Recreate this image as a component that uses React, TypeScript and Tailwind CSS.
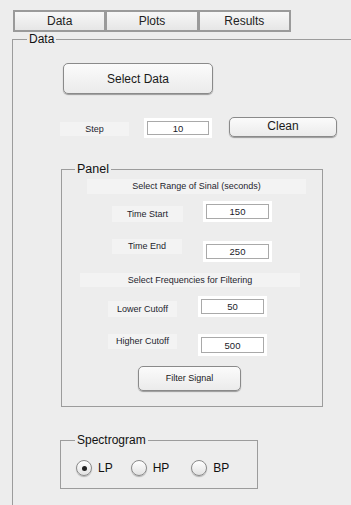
import React from "react";

const btn =
  "rounded-[5px] border border-[#8a8a8a] bg-gradient-to-b from-[#fbfbfb] to-[#ebebeb] shadow-[0_1px_1px_rgba(0,0,0,0.35)] flex items-center justify-center text-[#1a1a1a]";

function Field({ value, className }: { value: string; className: string }) {
  return (
    <div className={"bg-white p-[3px] " + className}>
      <div className="h-full w-full border border-[#a9a9a9] flex items-center justify-center text-[9.5px] leading-none text-[#1a1a2a] pt-[1px]">
        {value}
      </div>
    </div>
  );
}

function Label({ text, className }: { text: string; className: string }) {
  return (
    <div className={"bg-[#f3f3f3] flex items-center justify-center text-[9px] leading-none text-[#1e1e2e] " + className}>
      {text}
    </div>
  );
}

function Radio({ checked, label, className }: { checked?: boolean; label: string; className: string }) {
  return (
    <div className={"flex items-center " + className}>
      <div className="w-[16px] h-[16px] rounded-full border border-[#8a8a8a] bg-gradient-to-b from-[#ffffff] to-[#e2e2e2] shadow-[0_1px_1px_rgba(0,0,0,0.25)] flex items-center justify-center">
        {checked && <div className="w-[5px] h-[5px] rounded-full bg-[#222]" />}
      </div>
      <span className="ml-[6px] text-[12px] leading-none text-[#111]">{label}</span>
    </div>
  );
}

export default function App() {
  return (
    <div className="w-[351px] h-[505px] overflow-hidden bg-[#ededed] font-['Liberation_Sans',Arial,sans-serif] text-[#111]">
      {/* Tabs */}
      <div className="pt-[10px] pl-[13px]">
        <div className="flex w-[278px] h-[22px] border-2 border-[#9a9a9a] bg-gradient-to-b from-[#f7f7f7] to-[#e6e6e6] text-[12px] text-[#222]">
          <div className="flex-1 flex items-center justify-center">Data</div>
          <div className="flex-1 flex items-center justify-center border-l-[3px] border-[#9a9a9a]">Plots</div>
          <div className="flex-1 flex items-center justify-center border-l-[3px] border-[#9a9a9a]">Results</div>
        </div>
      </div>

      {/* Data frame */}
      <fieldset className="mt-[0px] ml-[12px] h-[480px] border-l border-t border-[#9c9c9c] min-w-0">
        <legend className="ml-[14px] px-[2px] text-[12px] leading-[14px]">Data</legend>

        <div className={btn + " mt-[17px] ml-[50px] w-[150px] h-[31px] text-[12px]"}>Select Data</div>

        <div className="flex items-start mt-[23px] h-[22px]">
          <Label text="Step" className="ml-[47px] mt-[5px] w-[69px] h-[14px]" />
          <Field value="10" className="ml-[15px] mt-[1px] w-[68px] h-[20px]" />
          <div className={btn + " ml-[17px] w-[108px] h-[20px] text-[12px] pb-[2px]"}>Clean</div>
        </div>

        {/* Panel */}
        <fieldset className="mt-[22px] ml-[48px] w-[262px] h-[246px] border border-[#9c9c9c]">
          <legend className="ml-[13px] px-[2px] text-[12.5px] leading-[16px]">Panel</legend>

          <Label text="Select Range of Sinal (seconds)" className="mt-[2px] ml-[25px] w-[219px] h-[15px]" />

          <div className="flex items-start mt-[7px]">
            <Label text="Time Start" className="ml-[50px] mt-[5px] w-[71px] h-[16px]" />
            <Field value="150" className="ml-[20px] w-[69px] h-[21px]" />
          </div>

          <div className="flex items-start mt-[17px]">
            <Label text="Time End" className="ml-[50px] w-[70px] h-[15px]" />
            <Field value="250" className="ml-[21px] mt-[2px] w-[69px] h-[21px]" />
          </div>

          <Label text="Select Frequencies for Filtering" className="mt-[11px] ml-[18px] w-[220px] h-[14px]" />

          <div className="flex items-start mt-[9px]">
            <Label text="Lower Cutoff" className="ml-[46px] mt-[5px] w-[69px] h-[16px]" />
            <Field value="50" className="ml-[21px] w-[69px] h-[21px]" />
          </div>

          <div className="flex items-start mt-[17px]">
            <Label text="Higher Cutoff" className="ml-[46px] w-[69px] h-[15px]" />
            <Field value="500" className="ml-[21px] w-[69px] h-[22px]" />
          </div>

          <div className={btn + " mt-[10px] ml-[76px] w-[103px] h-[25px] text-[9px]"}>Filter Signal</div>
        </fieldset>

        {/* Spectrogram */}
        <fieldset className="mt-[25px] ml-[47px] w-[198px] h-[57px] border border-[#9c9c9c]">
          <legend className="ml-[14px] px-[2px] text-[12px] leading-[16px]">Spectrogram</legend>
          <div className="flex items-center mt-[12px]">
            <Radio checked label="LP" className="ml-[15px]" />
            <Radio label="HP" className="ml-[18px]" />
            <Radio label="BP" className="ml-[22px]" />
          </div>
        </fieldset>
      </fieldset>
    </div>
  );
}
